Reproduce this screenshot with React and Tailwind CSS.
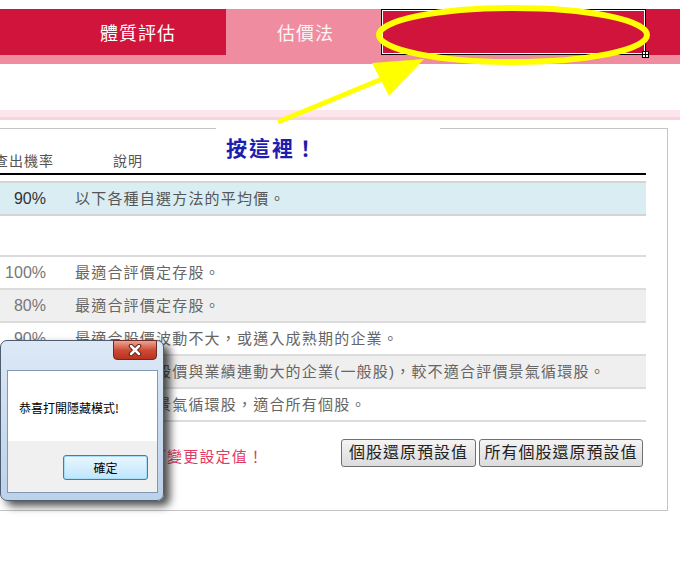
import React from 'react';

const font = { fontFamily: '"Liberation Sans", "Noto Sans CJK TC", sans-serif' };

const rows = [
  { pct: '100%', text: '最適合評價定存股。', bg: 'bg-white' },
  { pct: '80%', text: '最適合評價定存股。', bg: 'bg-[#efefef]' },
  { pct: '90%', text: '最適合股價波動不大，或邁入成熟期的企業。', bg: 'bg-white' },
  { pct: '90%', text: '最適合評價股價與業績連動大的企業(一般股)，較不適合評價景氣循環股。', bg: 'bg-[#efefef]' },
  { pct: '90%', text: '不適合評價景氣循環股，適合所有個股。', bg: 'bg-white' },
];

const App = () => {
  return (
    <div className="relative h-[569px] w-[680px] overflow-hidden bg-white pt-[9px]" style={font}>
      {/* Tabs */}
      <div className="flex h-[46px] text-[18px] tracking-[1px] text-white">
        <div className="flex w-[226px] items-center justify-end bg-[#d0143c] pr-[50px] pt-[4px]">體質評估</div>
        <div className="flex w-[155px] items-center justify-center bg-[#f08ca0] pl-[4px] pt-[4px] text-[#fff4f6]">估價法</div>
        <div className="relative w-[265px] border border-black bg-[#d0143c] shadow-[inset_0_0_0_1px_white]">
          <div className="absolute -bottom-[4px] -right-[4px] grid h-[7px] w-[7px] grid-cols-2 gap-[1px] border border-black bg-black">
            <span className="bg-white" />
            <span className="bg-white" />
            <span className="bg-white" />
            <span className="bg-white" />
          </div>
        </div>
        <div className="flex-1 bg-[#d0143c]" />
      </div>
      <div className="h-[9px] bg-[#f08ca0]" />
      <div className="h-[46px]" />
      <div className="h-[7px] bg-[#fde6eb]" />
      <div className="h-[3px] bg-[#fad3dc]" />
      <div className="h-[8px]" />

      {/* Table box */}
      <div className="-ml-[40px] h-[383px] w-[708px] border border-[#c4c4c4] pr-[21px]">
        <div className="flex h-[46px] items-end border-b-2 border-black pb-[1px] text-[14px] tracking-[1px] text-[#555]">
          <span className="w-[93px] whitespace-nowrap text-right">查出機率</span>
          <span className="ml-[59px]">說明</span>
        </div>

        <div className="mt-[6px] flex h-[35px] items-center border-y-2 border-[#d4d4d4] bg-[#daedf2] pt-[1px]">
          <span className="w-[85px] text-right text-[16px] text-[#333]">90%</span>
          <span className="ml-[29px] text-[15px] tracking-[1.2px] text-[#555]">以下各種自選方法的平均價。</span>
        </div>

        <div className="h-[39px]" />

        {rows.map((r, i) => (
          <div
            key={i}
            className={`flex items-center border-t-2 border-[#dcdcdc] pt-[1px] ${r.bg} ${i === rows.length - 1 ? 'h-[35px] border-b-2' : 'h-[33px]'}`}
          >
            <span className="w-[85px] text-right text-[16px] text-[#777]">{r.pct}</span>
            <span className="ml-[29px] whitespace-nowrap text-[15px] tracking-[1.2px] text-[#666]">{r.text}</span>
          </div>
        ))}

        <div className="mt-[16px] flex items-center">
          <span className="ml-[125px] mt-[8px] text-[15px] tracking-[1.2px] text-[#e03a63]">點選數字可變更設定值！</span>
          <div className="ml-auto mr-[3px] flex gap-[3px] text-[16px] tracking-[1px] text-[#222]">
            <button className="h-[28px] w-[135px] rounded-[3px] border border-[#707070] bg-gradient-to-b from-[#f4f4f4] to-[#dcdcdc]">個股還原預設值</button>
            <button className="h-[28px] w-[164px] rounded-[3px] border border-[#707070] bg-gradient-to-b from-[#f4f4f4] to-[#dcdcdc]">所有個股還原預設值</button>
          </div>
        </div>
      </div>

      {/* Callout label */}
      <div className="absolute left-[216px] top-[121px] h-[14px] w-[224px] bg-white" />
      <div className="absolute left-[226px] top-[132px] text-[21px] font-bold tracking-[2px] text-[#1d1db0]" style={{ fontFamily: '"Noto Sans CJK TC", sans-serif' }}>
        按這裡！
      </div>

      {/* Windows message box */}
      <div className="absolute left-0 top-[340px] h-[161px] w-[164px] rounded-[7px] border border-[#4f5d70] bg-gradient-to-b from-[#dde9f6] via-[#cbdcef] to-[#bcd2ea] shadow-[6px_5px_8px_rgba(0,0,0,0.7)]">
        <div className="absolute left-[112px] top-[-1px] flex h-[20px] w-[44px] items-center justify-center rounded-b-[4px] border border-[#6e2a22] bg-gradient-to-b from-[#e8a596] via-[#cf4b36] to-[#b8321f]">
          <svg width="14" height="12" viewBox="0 0 14 12">
            <path d="M3 2 L11 10 M11 2 L3 10" stroke="#5a1a12" strokeWidth="4.5" strokeLinecap="round" />
            <path d="M3 2 L11 10 M11 2 L3 10" stroke="#fff" strokeWidth="2.5" strokeLinecap="round" />
          </svg>
        </div>
        <div className="absolute left-[6px] top-[29px] flex h-[123px] w-[151px] flex-col border border-[#8297b0]">
          <div className="h-[70px] bg-white pl-[11px] pt-[28px] text-[12px] text-black" style={{ fontFamily: '"Noto Sans CJK TC", sans-serif' }}>
            恭喜打開隱藏模式!
          </div>
          <div className="flex flex-1 justify-end bg-[#f0f0f0] pr-[9px] pt-[14px]">
            <button className="h-[25px] w-[85px] rounded-[3px] border border-[#3c7fb1] bg-gradient-to-b from-[#eaf6fd] to-[#bee6fd] text-[12px] text-black shadow-[inset_0_0_0_1px_#a8dcf7]" style={{ fontFamily: '"Noto Sans CJK TC", sans-serif' }}>
              確定
            </button>
          </div>
        </div>
      </div>

      {/* Yellow annotation */}
      <svg className="pointer-events-none absolute left-0 top-0" width="680" height="569">
        <ellipse cx="513" cy="35" rx="134" ry="27" fill="none" stroke="#ffff00" strokeWidth="6" />
        <line x1="278" y1="122" x2="382" y2="79" stroke="#ffff00" strokeWidth="5" />
        <polygon points="372,63 424,59 389,96" fill="#ffff00" />
      </svg>
    </div>
  );
};

export default App;
